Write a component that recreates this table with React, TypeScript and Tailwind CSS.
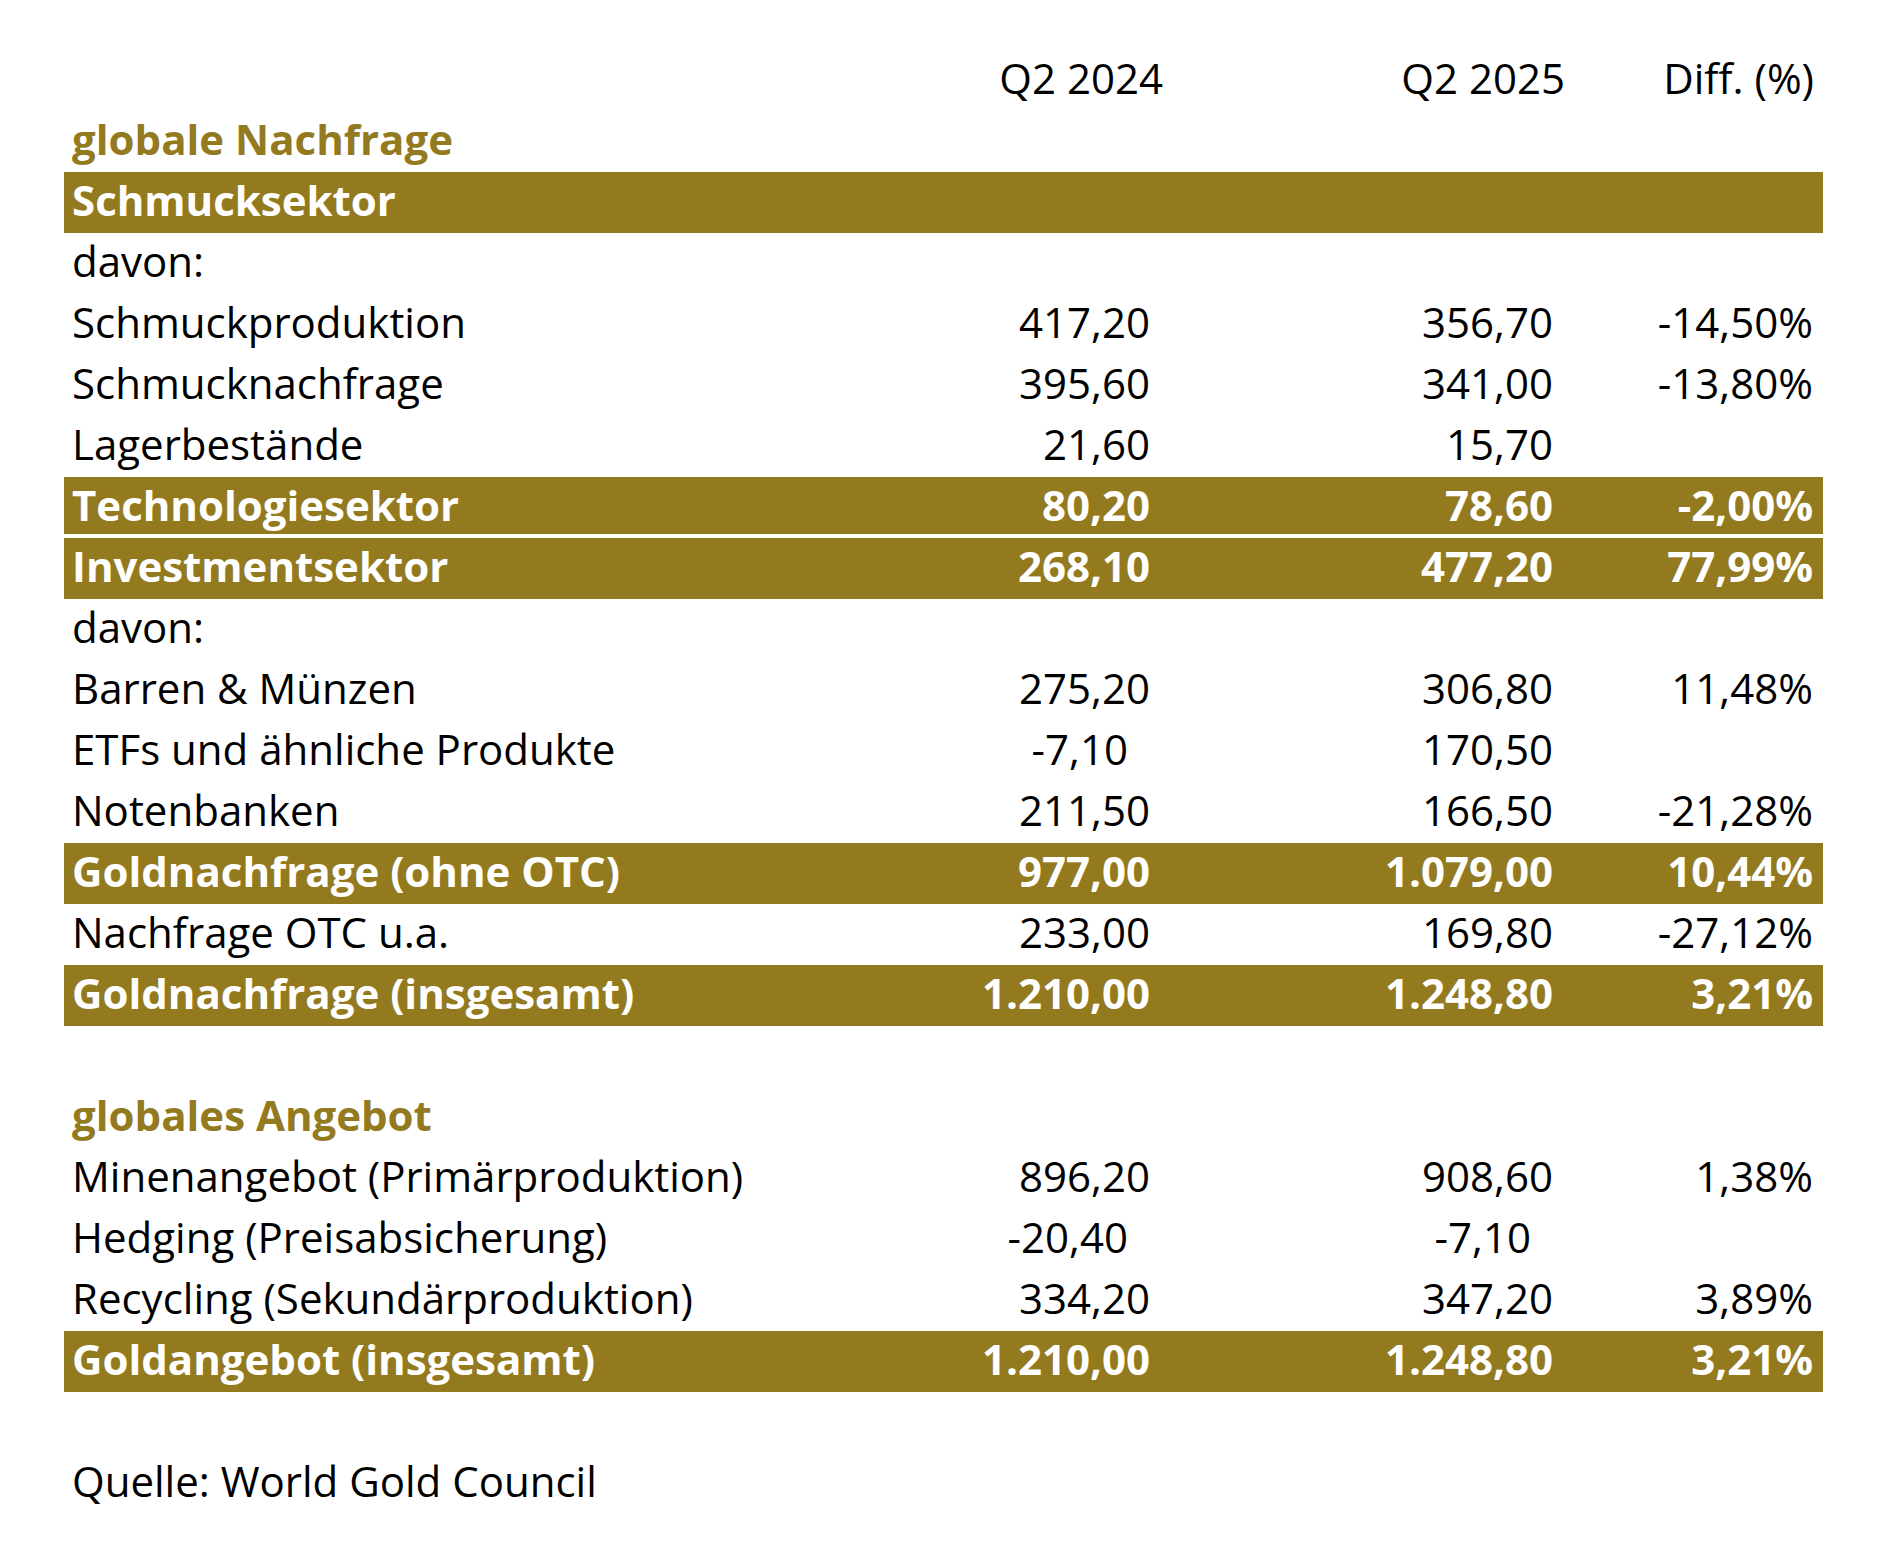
import React from "react";

type Row = {
  label: string;
  a?: string;
  b?: string;
  c?: string;
  kind: "band" | "plain" | "title" | "empty";
  gapAfter?: boolean;
};

const rows: Row[] = [
  { label: "globale Nachfrage", kind: "title" },
  { label: "Schmucksektor", kind: "band" },
  { label: "davon:", kind: "plain" },
  { label: "Schmuckproduktion", a: "417,20", b: "356,70", c: "-14,50%", kind: "plain" },
  { label: "Schmucknachfrage", a: "395,60", b: "341,00", c: "-13,80%", kind: "plain" },
  { label: "Lagerbestände", a: "21,60", b: "15,70", kind: "plain" },
  { label: "Technologiesektor", a: "80,20", b: "78,60", c: "-2,00%", kind: "band", gapAfter: true },
  { label: "Investmentsektor", a: "268,10", b: "477,20", c: "77,99%", kind: "band" },
  { label: "davon:", kind: "plain" },
  { label: "Barren & Münzen", a: "275,20", b: "306,80", c: "11,48%", kind: "plain" },
  { label: "ETFs und ähnliche Produkte", a: "-7,10", b: "170,50", kind: "plain" },
  { label: "Notenbanken", a: "211,50", b: "166,50", c: "-21,28%", kind: "plain" },
  { label: "Goldnachfrage (ohne OTC)", a: "977,00", b: "1.079,00", c: "10,44%", kind: "band" },
  { label: "Nachfrage OTC u.a.", a: "233,00", b: "169,80", c: "-27,12%", kind: "plain" },
  { label: "Goldnachfrage (insgesamt)", a: "1.210,00", b: "1.248,80", c: "3,21%", kind: "band" },
  { label: "", kind: "empty" },
  { label: "globales Angebot", kind: "title" },
  { label: "Minenangebot (Primärproduktion)", a: "896,20", b: "908,60", c: "1,38%", kind: "plain" },
  { label: "Hedging (Preisabsicherung)", a: "-20,40", b: "-7,10", kind: "plain" },
  { label: "Recycling (Sekundärproduktion)", a: "334,20", b: "347,20", c: "3,89%", kind: "plain" },
  { label: "Goldangebot (insgesamt)", a: "1.210,00", b: "1.248,80", c: "3,21%", kind: "band" },
  { label: "", kind: "empty" },
  { label: "Quelle: World Gold Council", kind: "plain" },
];

function Num({ v, cls, shiftNeg }: { v?: string; cls: string; shiftNeg?: boolean }) {
  const neg = shiftNeg && v !== undefined && v.startsWith("-");
  return (
    <div className={cls}>
      {v ? <span className={neg ? "pr-[22px]" : ""}>{v}</span> : null}
    </div>
  );
}

export default function App() {
  return (
    <div
      className="w-[1886px] h-[1560px] bg-white text-black pt-[50px] pl-[64px]"
      style={{ fontFamily: '"Open Sans", "Noto Sans", sans-serif' }}
    >
      <div className="w-[1759px] text-[42px] leading-none">
        {/* header */}
        <div className="flex h-[61px] items-center pb-[6px]">
          <div className="w-[686px]" />
          <div className="w-[413px] text-right">Q2 2024</div>
          <div className="w-[402px] text-right">Q2 2025</div>
          <div className="w-[258px] text-right pr-[9px]">Diff. (%)</div>
        </div>
        {rows.map((r, i) => {
          if (r.kind === "empty") return <div key={i} className="h-[61px]" />;
          if (r.kind === "title")
            return (
              <div key={i} className="flex h-[61px] items-center pb-[6px] pl-[8px] font-bold text-[#937a1f]">
                {r.label}
              </div>
            );
          const band = r.kind === "band";
          const rowCls = band
            ? `flex h-[61px] items-center font-bold text-white bg-[#937a1f] ${r.gapAfter ? "border-b-4 border-white pb-[2px]" : "pb-[6px]"}`
            : "flex h-[61px] items-center pb-[6px]";
          return (
            <div key={i} className={rowCls}>
              <div className="w-[686px] pl-[8px] whitespace-nowrap">{r.label}</div>
              <Num v={r.a} cls="w-[400px] text-right" shiftNeg />
              <Num v={r.b} cls="w-[403px] text-right" shiftNeg />
              <Num v={r.c} cls="w-[270px] text-right pr-[10px]" />
            </div>
          );
        })}
      </div>
    </div>
  );
}
